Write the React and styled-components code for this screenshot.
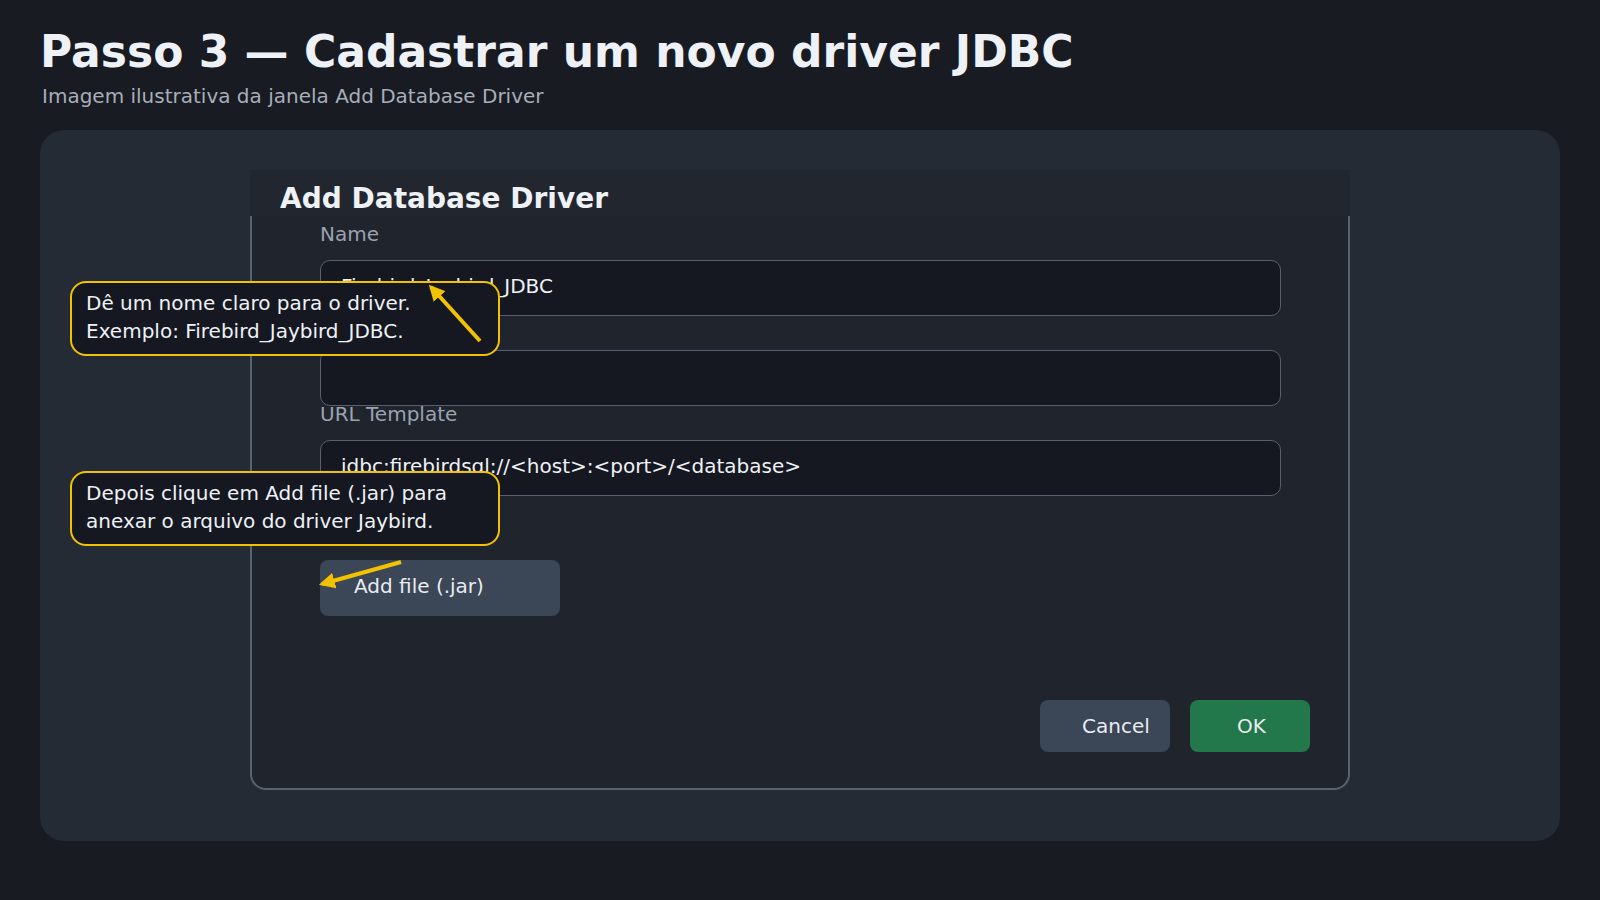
import styled, { createGlobalStyle } from "styled-components";

const GlobalStyle = createGlobalStyle`
  body {
    margin: 0;
    background: #181b22;
    font-family: "DejaVu Sans", "Noto Sans", sans-serif;
    color: #eef1f6;
  }
`;

const Page = styled.div`
  padding: 25px 40px 0;
`;

const Title = styled.h1`
  margin: 0;
  font-size: 44px;
  font-weight: 700;
  color: #eef1f6;
  line-height: 54px;
`;

const Subtitle = styled.p`
  margin: 5px 0 0 2px;
  font-size: 20px;
  line-height: 24px;
  color: #a7aeba;
`;

const Panel = styled.div`
  position: relative;
  margin-top: 22px;
  height: 711px;
  box-sizing: border-box;
  padding-top: 40px;
  background: #252b35;
  border-radius: 24px;
  display: flex;
  justify-content: center;
`;

const Dialog = styled.div`
  width: 1100px;
  height: 620px;
  display: flex;
  flex-direction: column;
`;

const DialogHeader = styled.div`
  height: 46px;
  box-sizing: border-box;
  padding: 13px 30px 0;
  background: #22262f;
  font-size: 28px;
  font-weight: 700;
  line-height: 32px;
  color: #eef1f6;
`;

const DialogBody = styled.div`
  flex: 1;
  display: flex;
  flex-direction: column;
  padding: 10px 38px 36px 68px;
  background: #20242d;
  border: 2px solid #5a6272;
  border-top: none;
  border-radius: 0 0 16px 16px;
`;

const Field = styled.div`
  width: 961px;
  display: flex;
  flex-direction: column;
`;

const Label = styled.label`
  font-size: 20px;
  line-height: 16px;
  color: #9ba3b0;
  margin-bottom: 18px;
`;

const Input = styled.div`
  height: 56px;
  box-sizing: border-box;
  display: flex;
  align-items: center;
  padding: 0 20px 4px;
  background: #151820;
  border: 1px solid #566070;
  border-radius: 10px;
  font-size: 20px;
  color: #eef1f6;
`;

const Button = styled.div`
  height: ${(p) => p.$h}px;
  width: ${(p) => p.$w}px;
  box-sizing: border-box;
  display: flex;
  align-items: center;
  padding-left: ${(p) => p.$pl}px;
  border-radius: 8px;
  background: ${(p) => (p.$primary ? "#22784a" : "#3b4656")};
  color: #e9ecf1;
  font-size: 20px;
`;

const FileButton = styled(Button)`
  margin-top: 64px;
  padding-bottom: 4px;
`;

const Footer = styled.div`
  margin-top: auto;
  display: flex;
  justify-content: flex-end;
  gap: 20px;
`;

const Callout = styled.div`
  position: absolute;
  left: 30px;
  top: ${(p) => p.$top}px;
  width: 430px;
  height: 75px;
  box-sizing: border-box;
  padding: 6px 14px;
  background: #151820;
  border: 2px solid #f2c200;
  border-radius: 16px;
  font-size: 20px;
  line-height: 28px;
  color: #eef1f6;
`;

const Arrows = styled.svg`
  position: absolute;
  left: 0;
  top: 0;
  width: 100%;
  height: 100%;
  pointer-events: none;
`;

export default function App() {
  return (
    <>
      <GlobalStyle />
      <Page>
        <Title>Passo 3 — Cadastrar um novo driver JDBC</Title>
        <Subtitle>Imagem ilustrativa da janela Add Database Driver</Subtitle>
        <Panel>
          <Dialog>
            <DialogHeader>Add Database Driver</DialogHeader>
            <DialogBody>
              <Field>
                <Label>Name</Label>
                <Input>Firebird_Jaybird_JDBC</Input>
              </Field>
              <Field>
                <Label>Class Name</Label>
                <Input />
              </Field>
              <Field>
                <Label>URL Template</Label>
                <Input>{"jdbc:firebirdsql://<host>:<port>/<database>"}</Input>
              </Field>
              <FileButton $w={240} $h={56} $pl={34}>
                Add file (.jar)
              </FileButton>
              <Footer>
                <Button $w={130} $h={52} $pl={42}>
                  Cancel
                </Button>
                <Button $w={120} $h={52} $pl={47} $primary>
                  OK
                </Button>
              </Footer>
            </DialogBody>
          </Dialog>
          <Callout $top={151}>
            Dê um nome claro para o driver.
            <br />
            Exemplo: Firebird_Jaybird_JDBC.
          </Callout>
          <Callout $top={341}>
            Depois clique em Add file (.jar) para
            <br />
            anexar o arquivo do driver Jaybird.
          </Callout>
          <Arrows>
            <defs>
              <marker
                id="head"
                viewBox="0 0 10 10"
                refX="8"
                refY="5"
                markerWidth="4"
                markerHeight="4"
                orient="auto"
              >
                <path d="M0 0 L10 5 L0 10 Z" fill="#f2c200" />
              </marker>
            </defs>
            <line x1="440" y1="211" x2="391" y2="157" stroke="#f2c200" strokeWidth="4" markerEnd="url(#head)" />
            <line x1="361" y1="432" x2="282" y2="454" stroke="#f2c200" strokeWidth="4" markerEnd="url(#head)" />
          </Arrows>
        </Panel>
      </Page>
    </>
  );
}
